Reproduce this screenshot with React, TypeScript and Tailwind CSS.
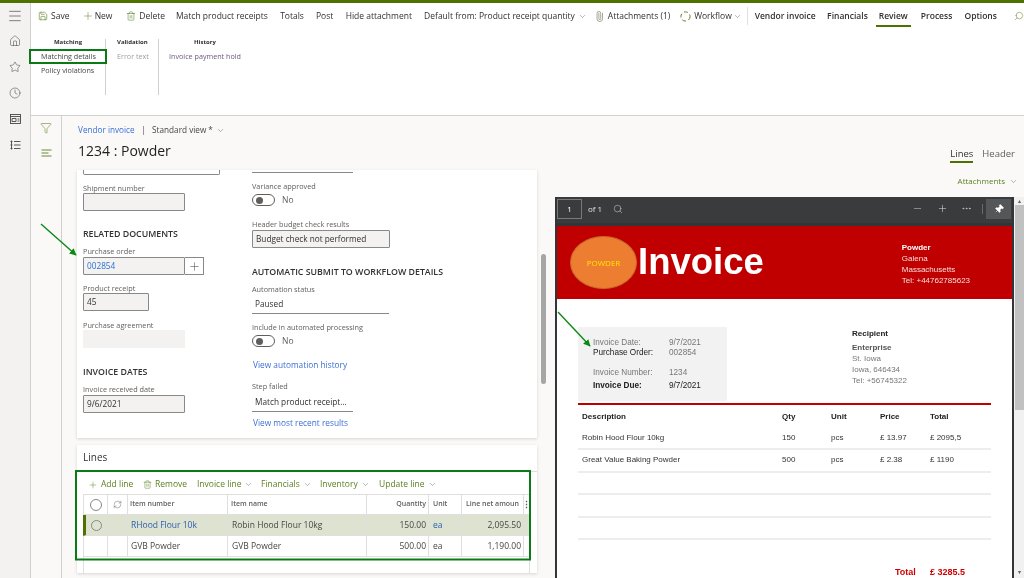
import { ChevronDown, Clock, Filter, Home, Menu, Minus, MoreHorizontal, Paperclip, Pin, Plus, RefreshCw, Save, Search, Star, Trash2 } from "lucide-react";
import type { ReactNode } from "react";

const segoe = "font-['Open_Sans','Noto_Sans',sans-serif]";
const arial = "font-['Liberation_Sans',Arial,sans-serif]";

function Label({ children, className = "" }: { children: ReactNode; className?: string }) {
  return <div className={`h-[10px] whitespace-nowrap text-[7.3px] leading-[10px] text-[#605e5c] ${className}`}>{children}</div>;
}

function Section({ children, className = "" }: { children: ReactNode; className?: string }) {
  return <div className={`h-[10px] whitespace-nowrap text-[8.8px] font-semibold leading-[10px] text-[#323130] ${className}`}>{children}</div>;
}

function ReadOnly({ children, className = "", link = false }: { children?: ReactNode; className?: string; link?: boolean }) {
  return (
    <div className={`flex h-[18px] items-center rounded-[1px] border border-[#8a8886] bg-[#f3f2f1] px-[3px] text-[8.25px] ${link ? "text-[#2b6fd6]" : "text-[#323130]"} ${className}`}>
      {children}
    </div>
  );
}

function Underlined({ children, className = "" }: { children: ReactNode; className?: string }) {
  return <div className={`flex h-[18px] items-center whitespace-nowrap border-b border-[#8a8886] px-[3px] text-[8.25px] text-[#323130] ${className}`}>{children}</div>;
}

function Toggle({ className = "" }: { className?: string }) {
  return (
    <div className={`flex h-[12px] items-center gap-[7px] ${className}`}>
      <div className="flex h-[12px] w-[23px] items-center rounded-full border border-[#605e5c] pl-[3px]">
        <div className="h-[7px] w-[7px] rounded-full bg-[#605e5c]" />
      </div>
      <span className="text-[8.5px] text-[#605e5c]">No</span>
    </div>
  );
}

function Bar({ children, className = "" }: { children: ReactNode; className?: string }) {
  return <span className={`flex items-center whitespace-nowrap text-[8.5px] text-[#323130] ${className}`}>{children}</span>;
}

function Caret({ className = "" }: { className?: string }) {
  return <ChevronDown className={`h-[9px] w-[9px] text-[#605e5c] ${className}`} strokeWidth={1.2} />;
}

function ActionBar() {
  return (
    <div className="flex h-[26px] items-center pl-[7px]">
      <Bar className="w-[44px]"><Save className="mr-[3px] h-[10px] w-[10px] text-[#5b7f1f]" strokeWidth={1.4} />Save</Bar>
      <Bar className="w-[45px]"><Plus className="mr-[1px] h-[12px] w-[12px] text-[#5b7f1f]" strokeWidth={1} />New</Bar>
      <Bar className="w-[50px]"><Trash2 className="mr-[3px] h-[10px] w-[10px] text-[#5b7f1f]" strokeWidth={1.3} />Delete</Bar>
      <Bar className="w-[105px]">Match product receipts</Bar>
      <Bar className="w-[36px]">Totals</Bar>
      <Bar className="w-[30px]">Post</Bar>
      <Bar className="w-[79px]">Hide attachment</Bar>
      <Bar className="w-[171px]">Default from: Product receipt quantity<Caret className="ml-[3px]" /></Bar>
      <Bar className="w-[87px]"><Paperclip className="mr-[3px] h-[11px] w-[11px] -rotate-45 text-[#8a8f7a]" strokeWidth={1.6} />Attachments (1)</Bar>
      <Bar className="w-[67px]">
        <svg className="mr-[3px]" width="11" height="11" viewBox="0 0 11 11" fill="none" strokeWidth="1">
          <circle cx="5.5" cy="5.5" r="4.6" stroke="#5b7f1f" strokeDasharray="4 2.5" />
        </svg>
        Workflow<Caret className="ml-[1px]" />
      </Bar>
      <div className="mr-[7px] h-[18px] w-px bg-[#e1dfdd]" />
      <Bar className="w-[73px] font-semibold">Vendor invoice</Bar>
      <Bar className="w-[52px] font-semibold">Financials</Bar>
      <div className="relative mr-[13px] flex h-[26px] items-center">
        <Bar className="font-semibold">Review</Bar>
        <div className="absolute bottom-[2px] left-[-3px] right-[-3px] h-[2px] bg-[#4f7100]" />
      </div>
      <Bar className="w-[44px] font-semibold">Process</Bar>
      <Bar className="w-[50px] font-semibold">Options</Bar>
      <Search className="h-[10px] w-[10px] scale-x-[-1] text-[#5b7f1f]" strokeWidth={1.2} />
    </div>
  );
}

function Ribbon() {
  return (
    <div className="flex h-[87px] border-b border-[#d2d0ce] pl-[10px] pt-[10px]">
      <div className="h-[56px] w-[65px] border-r border-[#d2d0ce] pr-[10px]">
        <div className="mt-[-2px] text-center text-[6px] font-bold leading-[10px] text-[#323130]">Matching</div>
        <div className="mt-[4px] whitespace-nowrap text-[7.2px] leading-[10px] text-[#484644]">Matching details</div>
        <div className="mt-[4px] whitespace-nowrap text-[7.2px] leading-[10px] text-[#484644]">Policy violations</div>
      </div>
      <div className="h-[56px] w-[53px] border-r border-[#d2d0ce] pl-[11px]">
        <div className="mt-[-2px] text-[6px] font-bold leading-[10px] text-[#323130]">Validation</div>
        <div className="mt-[4px] whitespace-nowrap text-[7.2px] leading-[10px] text-[#a19f9d]">Error text</div>
      </div>
      <div className="pl-[10px]">
        <div className="mt-[-2px] text-center text-[6px] font-bold leading-[10px] text-[#323130]">History</div>
        <div className="mt-[4px] whitespace-nowrap text-[7.2px] leading-[10px] text-[#6b5a80]">Invoice payment hold</div>
      </div>
    </div>
  );
}

function FormCard() {
  return (
    <div className="flex h-[268px] w-[460px] bg-white pl-[6px] shadow-[0_1px_3px_rgba(0,0,0,0.15)]">
      <div className="w-[169px]">
        <div className="h-[5px] w-[137px] rounded-b-[2px] border border-t-0 border-[#8a8886]" />
        <Label className="mt-[8px]">Shipment number</Label>
        <ReadOnly className="w-[102px]" />
        <Section className="mt-[18px]">RELATED DOCUMENTS</Section>
        <Label className="mt-[7px]">Purchase order</Label>
        <div className="mt-px flex">
          <ReadOnly link className="w-[102px]">002854</ReadOnly>
          <div className="flex h-[18px] w-[19px] items-center justify-center border border-l-0 border-[#8a8886]">
            <Plus className="h-[13px] w-[13px] text-[#484644]" strokeWidth={1} />
          </div>
        </div>
        <Label className="mt-[8px]">Product receipt</Label>
        <ReadOnly className="w-[66px]">45</ReadOnly>
        <Label className="mt-[9px]">Purchase agreement</Label>
        <div className="h-[18px] w-[102px] bg-[#f3f2f1]" />
        <Section className="mt-[19px]">INVOICE DATES</Section>
        <Label className="mt-[7px]">Invoice received date</Label>
        <ReadOnly className="mt-px w-[102px]">9/6/2021</ReadOnly>
      </div>
      <div>
        <div className="h-[3px] w-[101px] border-b border-[#8a8886]" />
        <Label className="mt-[8px]">Variance approved</Label>
        <Toggle className="mt-[3px]" />
        <Label className="mt-[13px]">Header budget check results</Label>
        <ReadOnly className="mt-px w-[138px]">Budget check not performed</ReadOnly>
        <Section className="mt-[19px]">AUTOMATIC SUBMIT TO WORKFLOW DETAILS</Section>
        <Label className="mt-[7px]">Automation status</Label>
        <Underlined className="mt-[2px] w-[137px]">Paused</Underlined>
        <Label className="mt-[8px]">Include in automated processing</Label>
        <Toggle className="mt-[3px]" />
        <div className="mt-[13px] pl-px text-[8.3px] leading-[10px] text-[#3b6fd8]">View automation history</div>
        <Label className="mt-[11px]">Step failed</Label>
        <Underlined className="mt-[3px] w-[101px]">Match product receipt...</Underlined>
        <div className="mt-[6px] pl-px text-[8.3px] leading-[10px] text-[#3b6fd8]">View most recent results</div>
      </div>
    </div>
  );
}

function Tool({ children, className = "" }: { children: ReactNode; className?: string }) {
  return <span className={`flex items-center whitespace-nowrap text-[8.5px] text-[#5b7f1f] ${className}`}>{children}</span>;
}

const cellLine = "flex h-full shrink-0 items-center whitespace-nowrap overflow-hidden border-r border-[#e1dfdd] px-[2px]";

function GridRow({ number, name, qty, unit, amount, active = false }: { number: string; name: string; qty: string; unit: string; amount: string; active?: boolean }) {
  return (
    <div className={`flex h-[21px] border-b border-[#e1dfdd] text-[8.5px] text-[#484644] ${active ? "border-l-[3px] border-l-[#4f7100] bg-[#dde3d0]" : "border-l border-l-[#e1dfdd]"}`}>
      <div className={`${cellLine} justify-center ${active ? "w-[22px]" : "w-[24px]"}`}>
        {active && <div className="h-[11px] w-[11px] rounded-full border border-[#8a8886]" />}
      </div>
      <div className={`${cellLine} w-[20px]`} />
      <div className={`${cellLine} w-[100px] pl-[3px] ${active ? "text-[#2b5db0]" : ""}`}>{number}</div>
      <div className={`${cellLine} w-[139px] pl-[4px]`}>{name}</div>
      <div className={`${cellLine} w-[62px] justify-end`}>{qty}</div>
      <div className={`${cellLine} w-[33px] pl-[4px] ${active ? "text-[#2b5db0]" : ""}`}>{unit}</div>
      <div className={`${cellLine} w-[62px] justify-end`}>{amount}</div>
      <div className="flex-1" />
    </div>
  );
}

function LinesCard() {
  return (
    <div className="mt-[7px] h-[128px] w-[460px] overflow-hidden bg-white pl-[6px] shadow-[0_1px_3px_rgba(0,0,0,0.15)]">
      <div className="pt-[7px] text-[10px] leading-[10px] text-[#323130]">Lines</div>
      <div className="mt-[9px] h-px bg-[#e1dfdd]" />
      <div className="flex h-[22px] items-center pl-[5px] pt-[3px]">
        <Tool className="w-[55px]"><Plus className="mr-[3px] h-[10px] w-[10px]" strokeWidth={1.1} />Add line</Tool>
        <Tool className="w-[54px]"><Trash2 className="mr-[3px] h-[9px] w-[9px]" strokeWidth={1.3} />Remove</Tool>
        <Tool className="w-[64px]">Invoice line<Caret className="ml-[3px]" /></Tool>
        <Tool className="w-[59px]">Financials<Caret className="ml-[3px]" /></Tool>
        <Tool className="w-[59px]">Inventory<Caret className="ml-[3px]" /></Tool>
        <Tool>Update line<Caret className="ml-[3px]" /></Tool>
      </div>
      <div className="h-[85px] w-[447px] border-r border-[#e1dfdd]">
        <div className="flex h-[21px] border-y border-l border-[#e1dfdd] text-[7px] font-semibold text-[#605e5c]">
          <div className={`${cellLine} w-[24px] justify-center`}><div className="h-[12px] w-[12px] rounded-full border border-[#8a8886]" /></div>
          <div className={`${cellLine} w-[20px] justify-center`}><RefreshCw className="h-[9px] w-[9px]" strokeWidth={1.2} /></div>
          <div className={`${cellLine} w-[100px]`}>Item number</div>
          <div className={`${cellLine} w-[139px] pl-[3px]`}>Item name</div>
          <div className={`${cellLine} w-[62px] justify-end`}>Quantity</div>
          <div className={`${cellLine} w-[33px] pl-[4px]`}>Unit</div>
          <div className={`${cellLine} w-[62px] justify-end pr-[4px]`}>Line net amoun</div>
          <div className="flex min-w-0 flex-1 items-center justify-center overflow-hidden text-[9px]">⋮</div>
        </div>
        <GridRow active number="RHood Flour 10k" name="Robin Hood Flour 10kg" qty="150.00" unit="ea" amount="2,095.50" />
        <GridRow number="GVB Powder" name="GVB Powder" qty="500.00" unit="ea" amount="1,190.00" />
        <div className="h-[22px] border-l border-[#e1dfdd]" />
      </div>
    </div>
  );
}

function PdfRow({ children, className = "" }: { children?: ReactNode; className?: string }) {
  return <div className={`flex h-[22.5px] items-center border-b-2 border-[#ededed] pl-[4px] text-[8px] text-[#333] ${className}`}>{children}</div>;
}

function PdfCells({ desc, qty, unit, price, total }: { desc: string; qty: string; unit: string; price: string; total: string }) {
  return (
    <>
      <span className="w-[200px]">{desc}</span>
      <span className="w-[49px]">{qty}</span>
      <span className="w-[49px]">{unit}</span>
      <span className="w-[50px]">{price}</span>
      <span>{total}</span>
    </>
  );
}

function Pdf() {
  return (
    <div className={`h-[381px] w-[459px] overflow-hidden border-x-[2px] border-[#323639] bg-[#323639] ${arial}`}>
      <div className={`flex h-[26px] items-center bg-[#3a3b3d] pb-[3px] pr-px text-white ${segoe}`}>
        <div className="flex h-[20px] w-[25px] items-center justify-center border border-[#77797b] text-[8px]">1</div>
        <span className="ml-[6px] text-[8px] text-[#e0e0e0]">of 1</span>
        <Search className="ml-[11px] h-[10px] w-[10px] text-[#d0d0d0]" strokeWidth={1.3} />
        <div className="flex-1" />
        <Minus className="h-[11px] w-[11px] text-[#bdbdbd]" strokeWidth={1.3} />
        <Plus className="ml-[14px] h-[11px] w-[11px] text-[#d0d0d0]" strokeWidth={1.3} />
        <MoreHorizontal className="ml-[13px] h-[11px] w-[11px] text-[#d0d0d0]" strokeWidth={1.5} />
        <div className="ml-[10px] h-[10px] w-px bg-[#6a6a6a]" />
        <div className="ml-[3px] flex h-[20px] w-[25px] items-center justify-center bg-[#555658]">
          <Pin className="h-[10px] w-[10px] rotate-45 fill-white text-white" strokeWidth={1.3} />
        </div>
      </div>
      <div className="h-[3px]" />
      <div className="h-[352px] bg-white">
        <div className="flex h-[73px] items-center bg-[#c00000] pl-[13px]">
          <div className={`flex h-[53px] w-[67px] items-center justify-center rounded-[50%] border border-[#c8692b] bg-[#ed7d31] text-[8px] text-[#ffe600] ${segoe}`}>POWDER</div>
          <div className="ml-[1px] text-[36.5px] font-bold leading-none text-white">Invoice</div>
          <div className="ml-[138px] pt-[4px] text-[8px] leading-[10.5px] text-[#f6dcdc]">
            <div className="font-bold text-white">Powder</div>
            <div className="mt-[1px]">Galena</div>
            <div>Massachusetts</div>
            <div className="mt-[1px]">Tel: +44762785623</div>
          </div>
        </div>
        <div className="ml-[21px] mr-[21px] mt-[28px] flex">
          <div className="h-[74px] w-[149px] bg-[#f2f2f2] pl-[15px] pt-[11px] text-[8.2px] leading-[10px] text-[#777]">
            <div className="flex"><span className="w-[76px]">Invoice Date:</span>9/7/2021</div>
            <div className="flex"><span className="w-[76px] text-[#222]">Purchase Order:</span>002854</div>
            <div className="mt-[10px] flex"><span className="w-[76px]">Invoice Number:</span>1234</div>
            <div className="mt-[3px] flex text-[#222]"><span className="w-[76px] font-bold">Invoice Due:</span>9/7/2021</div>
          </div>
          <div className="ml-[125px] pt-px text-[8px] leading-[11px] text-[#777]">
            <div className="font-bold text-[#222]">Recipient</div>
            <div className="mt-[3px] font-bold text-[#555]">Enterprise</div>
            <div>St. Iowa</div>
            <div>Iowa, 646434</div>
            <div>Tel: +56745322</div>
          </div>
        </div>
        <div className="mx-[21px] mt-[2px] h-[2px] bg-[#c00000]" />
        <div className="mx-[21px]">
          <div className="flex h-[23px] items-center pl-[4px] text-[8px] font-bold text-[#222]">
            <PdfCells desc="Description" qty="Qty" unit="Unit" price="Price" total="Total" />
          </div>
          <PdfRow className="!h-[22px]"><PdfCells desc="Robin Hood Flour 10kg" qty="150" unit="pcs" price="£ 13.97" total="£ 2095,5" /></PdfRow>
          <PdfRow><PdfCells desc="Great Value Baking Powder" qty="500" unit="pcs" price="£ 2.38" total="£ 1190" /></PdfRow>
          <PdfRow />
          <PdfRow />
          <PdfRow />
          <div className="mt-[26px] flex text-[9px] font-bold text-[#d00000]">
            <span className="ml-[317px] w-[35px]">Total</span>
            <span>£ 3285.5</span>
          </div>
        </div>
      </div>
    </div>
  );
}

function Annotations() {
  return (
    <svg className="pointer-events-none absolute inset-0" width="1024" height="578" fill="none">
      <defs>
        <marker id="tip" markerWidth="6" markerHeight="6" refX="4.5" refY="3" orient="auto">
          <path d="M0 0.5 L5 3 L0 5.5 Z" fill="#0a8a12" />
        </marker>
      </defs>
      <rect x="30" y="50" width="76" height="13" stroke="#0b7a16" strokeWidth="2" />
      <rect x="76" y="471" width="454" height="88.5" stroke="#0b7a16" strokeWidth="2" />
      <path d="M41 224 L76 255" stroke="#0a8a12" strokeWidth="1.4" markerEnd="url(#tip)" />
      <path d="M558 312 L590 346" stroke="#0a8a12" strokeWidth="1.4" markerEnd="url(#tip)" />
    </svg>
  );
}

function RailIcon({ children, className = "" }: { children: ReactNode; className?: string }) {
  return <div className={`flex h-[26px] items-center justify-center text-[#484644] ${className}`}>{children}</div>;
}

export default function App() {
  return (
    <div className={`relative flex h-[578px] w-[1024px] flex-col overflow-hidden bg-white blur-[0.35px] ${segoe}`}>
      <div className="h-[3px] bg-[#4f7100]" />
      <div className="flex min-h-0 flex-1">
        <nav className="w-[31px] border-r border-[#d2d0ce] bg-[#f3f2f1]">
          <RailIcon className="!h-[25px]"><Menu className="h-[16px] w-[16px]" strokeWidth={1} /></RailIcon>
          <RailIcon><Home className="h-[12px] w-[12px]" strokeWidth={1.1} /></RailIcon>
          <RailIcon><Star className="h-[12px] w-[12px]" strokeWidth={1.1} /></RailIcon>
          <RailIcon><Clock className="h-[12px] w-[12px]" strokeWidth={1.1} /></RailIcon>
          <RailIcon>
            <svg width="11" height="10" viewBox="0 0 11 10" fill="none" stroke="currentColor" strokeWidth="0.9">
              <rect x="0.5" y="0.5" width="10" height="9" />
              <path d="M0.5 2.5H10.5M2 4.5H6V7.5H2ZM7.5 5H9.5M7.5 7H9.5" />
            </svg>
          </RailIcon>
          <RailIcon>
            <svg width="11" height="10" viewBox="0 0 11 10" fill="none" stroke="currentColor" strokeWidth="0.9">
              <path d="M0.5 1.5H2.5M0.5 5H2.5M0.5 8.5H2.5M4 1.5H10.5M4 5H10.5M4 8.5H10.5M1.5 0.5V9.5" />
            </svg>
          </RailIcon>
        </nav>
        <div className="flex min-w-0 flex-1 flex-col">
          <ActionBar />
          <Ribbon />
          <div className="flex min-h-0 flex-1 bg-[#faf9f8]">
            <div className="flex w-[31px] flex-col items-center border-r border-[#d2d0ce] pt-[6px]">
              <Filter className="h-[12px] w-[12px] text-[#5b7f1f]" strokeWidth={1.1} />
              <svg className="mt-[15px] text-[#5b7f1f]" width="11" height="8" viewBox="0 0 11 8" stroke="currentColor" strokeWidth="0.9">
                <path d="M0.5 1H10.5M0.5 4H7.5M0.5 7H10.5" />
              </svg>
            </div>
            <div className="w-[493px] pl-[16px]">
              <div className="mt-[9px] flex h-[10px] items-center whitespace-nowrap text-[8.2px] leading-[10px] text-[#484644]">
                <span className="text-[#3b6fd8]">Vendor invoice</span>
                <span className="ml-[7px] mr-[6px]">|</span>
                <span>Standard view *</span>
                <Caret className="ml-[3px]" />
              </div>
              <div className="mt-[6px] h-[20px] text-[14px] font-medium leading-[20px] text-[#201f1e]">1234 : Powder</div>
              <div className="ml-[-1px] mt-[9px] flex">
                <div>
                  <FormCard />
                  <LinesCard />
                </div>
                <div className="ml-[4px] mt-[84px] h-[130px] w-[5px] rounded-full bg-[#a6a6a6]" />
              </div>
            </div>
            <div className="min-w-0 flex-1">
              <div className="flex h-[47px] items-end justify-end pr-[9px] text-[9.5px] text-[#605e5c]">
                <span className="border-b-2 border-[#4f7100] font-medium text-[#323130]">Lines</span>
                <span className="ml-[9px] pb-[2px]">Header</span>
              </div>
              <div className="mt-[12px] flex h-[12px] items-center justify-end pr-[6px] text-[8px] text-[#5b7f1f]">
                Attachments<Caret className="ml-[4px]" />
              </div>
              <div className="mt-[10px] flex">
                <Pdf />
                <div className="flex h-[381px] w-[10px] flex-col items-center bg-[#f1f1f1] text-[#606060]">
                  <div className="h-[8px] text-[6px] leading-[8px]">▴</div>
                  <div className="h-[205px] w-[9px] bg-[#c1c1c1]" />
                  <div className="mt-auto h-[10px] text-[6px] leading-[8px]">▾</div>
                </div>
              </div>
            </div>
          </div>
        </div>
      </div>
      <Annotations />
    </div>
  );
}
